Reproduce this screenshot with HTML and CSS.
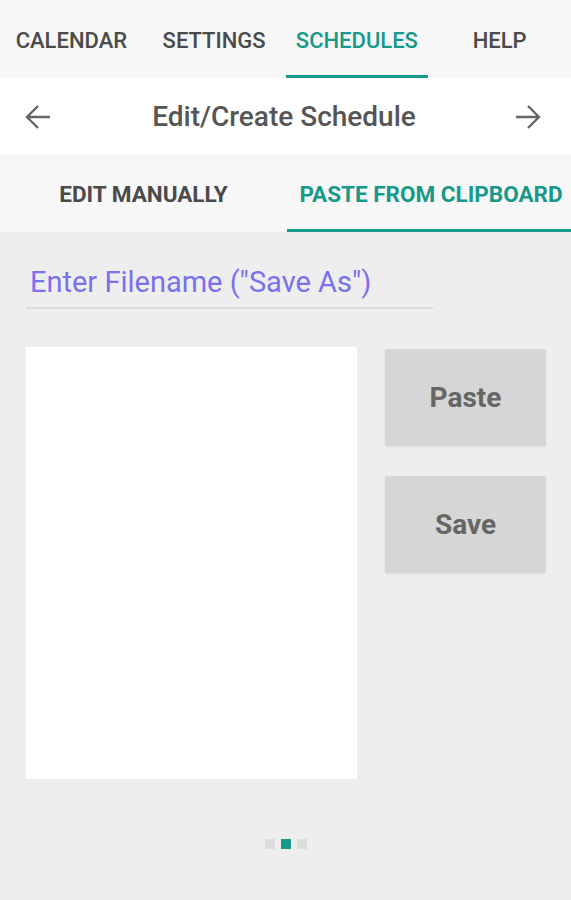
FILE: index.html
```html
<!DOCTYPE html>
<html>
<head>
<meta charset="utf-8">
<link rel="stylesheet" href="styles.css">
</head>
<body>
<div class="app">
  <nav class="tabs">
    <div class="tab">CALENDAR</div>
    <div class="tab">SETTINGS</div>
    <div class="tab active">SCHEDULES</div>
    <div class="tab">HELP</div>
  </nav>
  <header class="titlebar">
    <svg class="arrow" width="26" height="26" viewBox="0 0 26 26"><path d="M25 13H2M13 2L2 13l11 11" fill="none" stroke="#666" stroke-width="2.4"/></svg>
    <h1 class="title">Edit/Create Schedule</h1>
    <svg class="arrow" width="26" height="26" viewBox="0 0 26 26"><path d="M1 13h23M13 2l11 11-11 11" fill="none" stroke="#666" stroke-width="2.4"/></svg>
  </header>
  <nav class="subtabs">
    <div class="subtab">EDIT MANUALLY</div>
    <div class="subtab active">PASTE FROM CLIPBOARD</div>
  </nav>
  <main class="content">
    <div class="field">Enter Filename ("Save As")</div>
    <div class="work">
      <div class="textarea"></div>
      <div class="buttons">
        <button class="btn">Paste</button>
        <button class="btn">Save</button>
      </div>
    </div>
    <div class="dots">
      <span class="dot"></span><span class="dot on"></span><span class="dot"></span>
    </div>
  </main>
</div>
</body>
</html>
```
FILE: styles.css
```css
* { box-sizing: border-box; }
html, body { margin: 0; padding: 0; }
body {
  width: 571px;
  height: 900px;
  font-family: Roboto, "Liberation Sans", sans-serif;
  background: #eeeeee;
  overflow: hidden;
}
.app { display: flex; flex-direction: column; height: 900px; }
.tabs {
  display: flex;
  height: 78px;
  background: #f7f7f7;
}
.tab {
  width: 143px;
  display: flex;
  align-items: center;
  justify-content: center;
  font-size: 22px;
  font-weight: 500;
  color: #4a4a4a;
  padding-top: 6px;
  border-bottom: 3px solid transparent;
}
.tab.active { color: #17998a; border-bottom-color: #17998a; }
.titlebar {
  height: 77px;
  background: #ffffff;
  display: flex;
  align-items: center;
  justify-content: space-between;
  padding: 0 30px 0 25px;
}
.arrow { display: block; }
.title {
  margin: 0;
  font-size: 28px;
  font-weight: 500;
  color: #555;
  padding-left: 2px;
}
.subtabs {
  display: flex;
  height: 77px;
  background: #f7f7f7;
}
.subtab {
  flex: 1;
  display: flex;
  align-items: center;
  justify-content: center;
  font-size: 22.5px;
  font-weight: 700;
  color: #4a4a4a;
  padding-top: 3px;
  border-bottom: 3px solid transparent;
}
.subtab:first-child { flex: 0 0 287px; }
.subtab.active { color: #17998a; border-bottom-color: #17998a; padding-left: 4px; }
.content {
  flex: 1;
  padding: 29px 25px 0 26px;
  display: flex;
  flex-direction: column;
}
.field {
  width: 407px;
  font-size: 29px;
  color: #7b70ee;
  padding: 4px 0 8px 4px;
  border-bottom: 2px solid #dcdcdc;
}
.work {
  display: flex;
  gap: 28px;
  margin-top: 38px;
}
.textarea {
  width: 331px;
  height: 432px;
  background: #ffffff;
}
.buttons {
  display: flex;
  flex-direction: column;
  gap: 30px;
  padding-top: 2px;
}
.btn {
  width: 161px;
  height: 97px;
  border: none;
  border-radius: 2px;
  background: #d6d6d6;
  color: #666;
  font-family: Roboto, "Liberation Sans", sans-serif;
  font-size: 28px;
  font-weight: 700;
  box-shadow: 0 1px 2px rgba(0,0,0,0.08);
}
.dots {
  display: flex;
  justify-content: center;
  gap: 6px;
  margin-top: 60px;
}
.dot { width: 10px; height: 10px; background: #dcdcdc; }
.dot.on { background: #17998a; }
```
